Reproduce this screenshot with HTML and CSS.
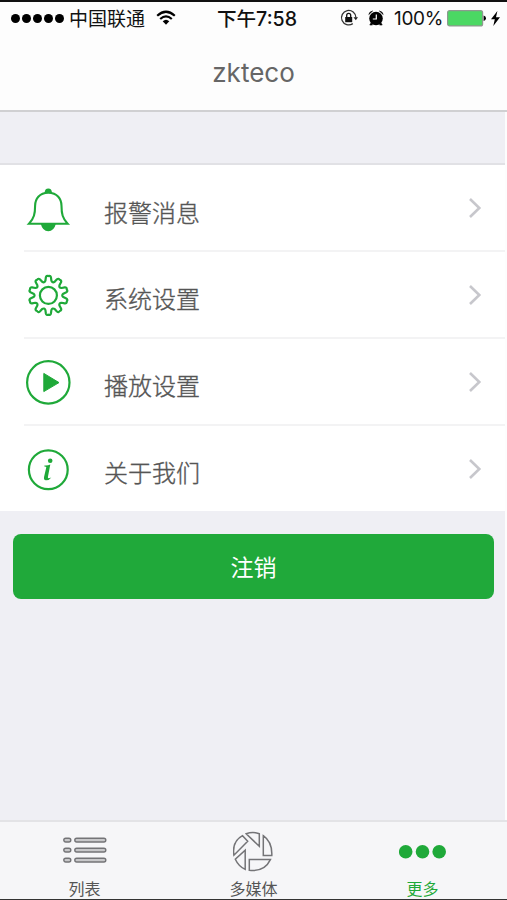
FILE: index.html
```html
<!DOCTYPE html>
<html lang="zh-CN">
<head>
<meta charset="utf-8">
<title>zkteco</title>
<link rel="stylesheet" href="styles.css">
</head>
<body>
<div class="app">
  <header class="header">
    <div class="status">
      <div class="status-left">
        <span class="signal"><i></i><i></i><i></i><i></i><i></i></span>
        <span class="carrier">中国联通</span>
        <svg class="wifi" width="20" height="16" viewBox="0 0 20 16" fill="none" stroke="#000" stroke-width="2.2">
          <path d="M1.2 5.7Q10-2.2 18.8 5.7M4.2 9Q10 3.9 15.8 9"/>
          <path d="M6.7 11.3Q10 8.3 13.3 11.3L10 14.8Z" fill="#000" stroke="none"/>
        </svg>
      </div>
      <div class="time">下午7:58</div>
      <div class="status-right">
        <svg class="lock" width="18" height="18" viewBox="0 0 18 18">
          <path d="M12.8 14.6A7.2 7.2 0 1 1 15.9 8.6" fill="none" stroke="#333" stroke-width="1.3"/>
          <path d="M13.5 8.3h4.5l-2.2 3z" fill="#222"/>
          <rect x="5.2" y="8" width="7" height="5.2" fill="#111"/>
          <path d="M6.7 8V6.4a2 2 0 0 1 4 0V8" fill="none" stroke="#111" stroke-width="1.3"/>
        </svg>
        <svg class="alarm" width="16" height="16" viewBox="0 0 16 16">
          <circle cx="8" cy="8.5" r="6.8"/>
          <path d="M.8 4.5Q1.2 1.8 4.6 1ZM15.2 4.5Q14.8 1.8 11.4 1ZM3.2 12.5L1.8 15H4.5ZM12.8 12.5L14.2 15H11.5Z" stroke="#000" stroke-width=".6"/>
          <path d="M8.3 4.5V9H4.8" fill="none" stroke="#fff" stroke-width="1.2"/>
        </svg>
        <span class="percent">100%</span>
        <svg class="battery" width="39" height="17" viewBox="0 0 39 17">
          <rect x=".6" y=".6" width="35" height="15.3" rx="2" fill="#4bd863" stroke="#8d9a8f" stroke-width="1.2"/>
          <path d="M36.6 5.5Q39 6 39 8.3T36.6 11Z"/>
        </svg>
        <svg class="bolt" width="9" height="15" viewBox="0 0 9 15"><path d="M6.4 0L0 8.3H3.8L2.3 15L9 6.2H5Z"/></svg>
      </div>
    </div>
    <h1 class="title">zkteco</h1>
  </header>
  <main class="main">
    <ul class="menu">
      <li class="item">
        <svg class="icon" width="48" height="48" viewBox="0 0 48 48">
          <path d="M24.3 8.7C15.3 8.7 11.1 15 11.1 21.8C11.1 29.8 10 34.5 5 39.7H43.6C38.6 34.5 37.5 29.8 37.5 21.8C37.5 15 33.3 8.7 24.3 8.7Z" fill="none" stroke="#1fa939" stroke-width="2.1"/>
          <path d="M20.6 9Q20.8 4.6 24.3 4.6T28 9ZM16.8 40H31.8Q30 47.2 24.3 47.2T16.8 40Z" fill="#1fa939"/>
        </svg>
        <span class="label label-first">报警消息</span>
        <svg class="chevron" width="14" height="22" viewBox="0 0 14 22"><path d="M2 2L11.3 11L2 20"/></svg>
      </li>
      <li class="item">
        <svg class="icon gear" width="48" height="48" viewBox="-24.4 -24.4 48 48" fill="none" stroke="#1fa939" stroke-width="2.2"></svg>
        <span class="label">系统设置</span>
        <svg class="chevron" width="14" height="22" viewBox="0 0 14 22"><path d="M2 2L11.3 11L2 20"/></svg>
      </li>
      <li class="item">
        <svg class="icon" width="48" height="48" viewBox="0 0 48 48">
          <circle cx="24.3" cy="24.4" r="21.2" fill="none" stroke="#1fa939" stroke-width="2.2"/>
          <path d="M19.8 15.4L35 24.6L19.8 33.6Z" fill="#1fa939" stroke="#1fa939" stroke-linejoin="round"/>
        </svg>
        <span class="label">播放设置</span>
        <svg class="chevron" width="14" height="22" viewBox="0 0 14 22"><path d="M2 2L11.3 11L2 20"/></svg>
      </li>
      <li class="item">
        <svg class="icon" width="48" height="48" viewBox="0 0 48 48">
          <circle cx="24.3" cy="24.8" r="19.4" fill="none" stroke="#1fa939" stroke-width="2.2"/>
          <circle cx="26.2" cy="15.8" r="2.3" fill="#1fa939"/>
          <path d="M20.4 20.4Q23.5 20.8 26.3 19.4L23.9 32Q23.5 34.2 27.3 32.5Q25.2 35.5 21.8 35.3Q19.4 35 20.1 31.8L22.3 22.2Q22.3 21.5 20.4 21.4Z" fill="#1fa939"/>
        </svg>
        <span class="label">关于我们</span>
        <svg class="chevron" width="14" height="22" viewBox="0 0 14 22"><path d="M2 2L11.3 11L2 20"/></svg>
      </li>
    </ul>
    <button class="logout">注销</button>
  </main>
  <nav class="tabs">
    <div class="tab">
      <svg width="44" height="42" viewBox="0 0 44 42" fill="#c8c8ca" stroke="#747477" stroke-width="1.4">
        <rect x=".8" y="7.2" width="7" height="3.8" rx="1.9"/><rect x="11.8" y="7.2" width="31" height="3.8" rx="1.9"/>
        <rect x=".8" y="17.2" width="7" height="3.8" rx="1.9"/><rect x="11.8" y="17.2" width="31" height="3.8" rx="1.9"/>
        <rect x=".8" y="27.2" width="7" height="3.8" rx="1.9"/><rect x="11.8" y="27.2" width="31" height="3.8" rx="1.9"/>
      </svg>
      <span>列表</span>
    </div>
    <div class="tab">
      <svg width="42" height="42" viewBox="0 0 42 42" fill="none" stroke="#747477" stroke-width="1.5">
        <path d="M13.2 2.7Q20 .2 26.3 2.7V15.3ZM30.3 4.7Q39.4 11 38.8 24.5H30.3ZM37.4 28.6Q31.5 41 16.3 39.3V28.6ZM12.2 19.2V38.4Q5.5 35.2 2.3 28.2ZM.9 24.2Q-1.2 10.5 9.5 4.7L14.7 10.3Z"/>
      </svg>
      <span>多媒体</span>
    </div>
    <div class="tab active">
      <svg width="48" height="42" viewBox="0 0 48 42" fill="#1fa939"><circle cx="6.7" cy="20.7" r="6.8"/><circle cx="23.5" cy="20.7" r="6.8"/><circle cx="40.2" cy="20.7" r="6.8"/></svg>
      <span>更多</span>
    </div>
  </nav>
</div>
<script src="gear.js"></script>
</body>
</html>
```
FILE: gear.js
```js
const gear = document.querySelector('.gear');
const teeth = 10;
const step = Math.PI * 2 / teeth;
const point = (r, a) => (r * Math.sin(a)).toFixed(2) + ' ' + (-r * Math.cos(a)).toFixed(2);
let d = '';
for (let i = 0; i < teeth; i++) {
  const a = i * step;
  d += (i ? 'L' : 'M') + point(15, a - 0.2) + 'L' + point(18.2, a - 0.14) +
    'Q' + point(20.2, a - 0.1) + ' ' + point(19.3, a) +
    'Q' + point(20.2, a + 0.1) + ' ' + point(18.2, a + 0.14) +
    'L' + point(15, a + 0.2) + 'Q' + point(12.8, a + step / 2) + ' ' + point(15, a + step - 0.2);
}
gear.innerHTML = '<path stroke-linejoin="round" d="' + d + 'Z"/><circle r="8.5"/>';
```
FILE: styles.css
```css
* { box-sizing: border-box; }
body {
  margin: 0;
  background: #fdfdfd;
  font-family: Inter, "Noto Sans CJK SC", sans-serif;
}
.app {
  width: 507px;
  height: 900px;
  display: flex;
  flex-direction: column;
  border-top: 2px solid #111;
  border-bottom: 1px solid #333;
  overflow: hidden;
}
.header {
  height: 110px;
  flex: none;
  background: #fdfdfd;
  border-bottom: 2px solid #d0d0d2;
}
.status {
  height: 32px;
  display: grid;
  grid-template-columns: 215px 84px 1fr;
  align-items: center;
  color: #111;
}
.status-left, .status-right { display: flex; align-items: center; }
.status-left { padding-left: 11px; }
.signal { display: flex; gap: 2px; }
.signal i { width: 9px; height: 9px; border-radius: 50%; background: #000; }
.carrier { margin-left: 5px; padding-top: 3px; font-size: 19px; line-height: 28px; white-space: nowrap; }
.wifi { margin-left: 11px; }
.time { padding-top: 2px; font-size: 19.6px; font-weight: 500; line-height: 28px; white-space: nowrap; text-align: center; }
.status-right { padding-left: 41px; }
.alarm { margin-left: 10px; }
.percent { width: 48px; margin-left: 10px; padding-top: 2px; font-size: 19px; line-height: 28px; letter-spacing: -0.3px; }
.battery { margin-left: 5px; flex: none; }
.bolt { margin-left: 5px; flex: none; }
.title {
  margin: 22px 0 0;
  text-align: center;
  font-size: 26px;
  line-height: 34px;
  font-weight: 400;
  color: #666;
}
.main {
  flex: 1;
  width: 505px;
  padding-top: 51px;
  background: #efeff4;
}
.menu {
  margin: 0;
  padding: 0;
  list-style: none;
  background: #fff;
  border-top: 2px solid #e1e1e5;
}
.item {
  height: 87px;
  margin-left: 24px;
  display: flex;
  align-items: center;
  border-bottom: 2px solid #f3f3f4;
}
.item:last-child { height: 85px; border-bottom: 0; }
.icon { flex: none; }
.label {
  margin: 10px 0 0 32px;
  flex: 1;
  font-size: 24px;
  line-height: 36px;
  font-weight: 300;
  color: #555;
  -webkit-text-stroke: 0.35px #555;
}
.label-first { margin-top: 13px; }
.chevron { margin-right: 23px; fill: none; stroke: #c7c7cc; stroke-width: 2.6; }
.logout {
  display: block;
  width: 481px;
  height: 65px;
  margin: 23px 0 0 13px;
  padding: 0 0 2px;
  border: 0;
  border-radius: 8px;
  background: #20a93a;
  color: #fff;
  font: 23px/34px "Noto Sans CJK SC", sans-serif;
}
.tabs {
  height: 79px;
  flex: none;
  display: grid;
  grid-template-columns: repeat(3, 169px);
  border-top: 2px solid #e3e3e6;
  background: #f6f6f8;
}
.tab {
  padding-top: 9px;
  display: flex;
  flex-direction: column;
  align-items: center;
  color: #555;
  font-size: 16px;
  line-height: 24px;
}
.tab span { margin-top: 4px; }
.tab.active { color: #1fa939; }
```
